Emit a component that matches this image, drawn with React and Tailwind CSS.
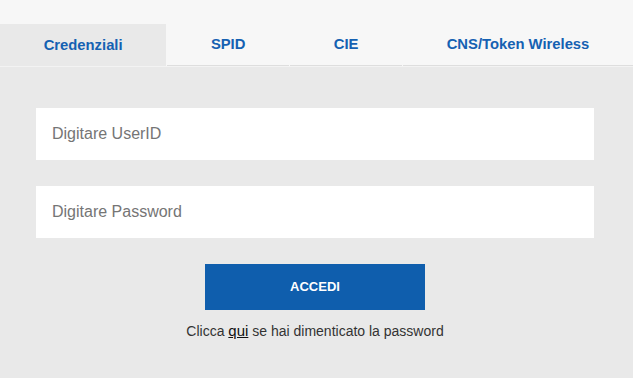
export default function App() {
  const tabs = ['Credenziali', 'SPID', 'CIE', 'CNS/Token Wireless'];
  return (
    <div className="w-[633px] h-[378px] bg-[#e9e9e9] font-['Liberation_Sans',Arial,sans-serif]">
      <div className="bg-[#f7f7f7] pt-6">
        <div className="flex border-b border-[#f3f3f3]">
          {tabs.map((t, i) => (
            <div
              key={t}
              className={
                i === 0
                  ? 'flex-auto h-[42px] flex items-center justify-center bg-[#e9e9e9] text-[#1561b2] font-bold text-[14.8px]'
                  : 'flex-auto h-[42px] flex items-center justify-center border-b border-[#dedede] ml-px text-[#1561b2] font-bold text-[14.8px]'
              }
            >
              {t}
            </div>
          ))}
        </div>
      </div>
      <div className="pl-9 pr-[39px] pt-[41px]">
        <input
          className="block w-full h-[52px] bg-white px-4 text-[16px] text-[#333] placeholder:text-[#757575] outline-none"
          placeholder="Digitare UserID"
        />
        <input
          type="password"
          className="block w-full h-[52px] bg-white px-4 mt-[26px] text-[16px] text-[#333] placeholder:text-[#757575] outline-none"
          placeholder="Digitare Password"
        />
        <div className="flex justify-center mt-[26px]">
          <button className="w-[220px] h-[46px] bg-[#0f5ead] text-white font-bold text-[13px]">
            ACCEDI
          </button>
        </div>
        <p className="text-center text-[14px] text-[#333] mt-[10px]">
          Clicca <a className="underline text-[#111] text-[15px]" href="#">qui</a> se hai dimenticato la password
        </p>
      </div>
    </div>
  );
}
